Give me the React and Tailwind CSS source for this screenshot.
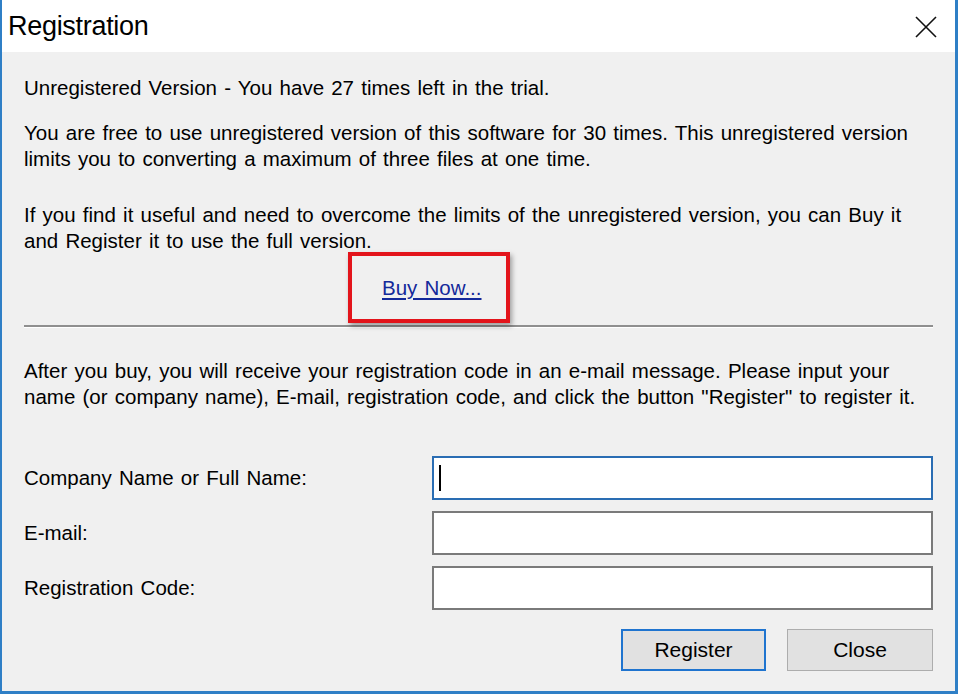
export default function App() {
  return (
    <div
      className="w-[958px] h-[694px] flex flex-col bg-[#f0f0f0] border-l-2 border-r-[3px] border-b-[3px] border-[#2f7fc6] overflow-hidden text-black"
      style={{ fontFamily: '"Liberation Sans", Arial, sans-serif' }}
    >
      {/* TITLE BAR */}
      <div className="h-[52px] shrink-0 bg-white flex items-center justify-between pl-[6px] pr-[18px]">
        <span className="text-[27px] tracking-[-0.3px]">Registration</span>
        <svg width="22" height="22" viewBox="0 0 22 22" className="mt-[1px]">
          <path d="M1 1 L21 21 M21 1 L1 21" stroke="#111" strokeWidth="1.6" fill="none" />
        </svg>
      </div>

      {/* BODY */}
      <div className="flex-1 flex flex-col pl-[22px] pr-[16px] pt-[23px] text-[20.5px] leading-[26px] [word-spacing:1.5px]">
        <p>Unregistered Version - You have 27 times left in the trial.</p>

        <p className="mt-[19px] whitespace-nowrap">
          You are free to use unregistered version of this software for 30 times. This unregistered version
          <br />
          limits you to converting a maximum of three files at one time.
        </p>

        <p className="mt-[30px] whitespace-nowrap">
          If you find it useful and need to overcome the limits of the unregistered version, you can Buy it
          <br />
          and Register it to use the full version.
        </p>

        <div className="relative mt-[21px] h-[26px] pl-[358px]">
          <a href="#" className="text-[#13299a] underline underline-offset-[3px]">
            Buy Now...
          </a>
          <div className="absolute left-[324px] top-[-23px] w-[162px] h-[71px] border-[4px] border-[#e3141b] shadow-[2px_3px_5px_rgba(0,0,0,0.35)]" />
        </div>

        {/* SEPARATOR */}
        <div className="mt-[24px] mr-[6px] border-t-2 border-[#8f8f8f] border-b border-b-white" />

        <p className="mt-[30px] whitespace-nowrap">
          After you buy, you will receive your registration code in an e-mail message. Please input your
          <br />
          name (or company name), E-mail, registration code, and click the button "Register" to register it.
        </p>

        {/* FORM */}
        <div className="mt-[46px] mr-[6px] grid grid-cols-[408px_1fr] gap-y-[11px] items-center">
          <label>Company Name or Full Name:</label>
          <div className="h-[44px] bg-white border-2 border-[#2a6db3] flex items-center pl-[5px]">
            <div className="w-[2px] h-[26px] bg-black" />
          </div>
          <label>E-mail:</label>
          <div className="h-[44px] bg-white border-2 border-[#7a7a7a]" />
          <label>Registration Code:</label>
          <div className="h-[44px] bg-white border-2 border-[#7a7a7a]" />
        </div>

        {/* BUTTONS */}
        <div className="mt-[19px] mr-[6px] flex justify-end gap-[21px] [word-spacing:0]">
          <button className="w-[145px] h-[42px] bg-[#e1e1e1] border-2 border-[#1f74cf] text-[21px]">
            Register
          </button>
          <button className="w-[146px] h-[42px] bg-[#e1e1e1] border border-[#adadad] text-[21px]">
            Close
          </button>
        </div>
      </div>
    </div>
  );
}
